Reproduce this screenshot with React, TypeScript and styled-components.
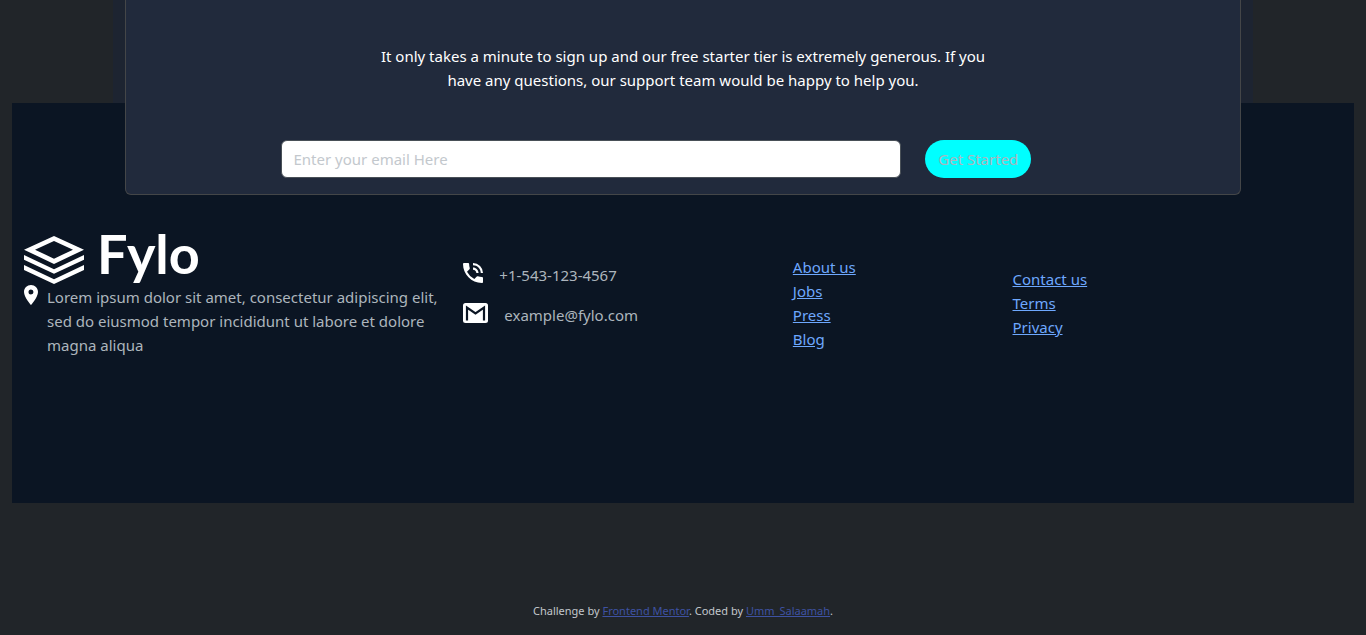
import React from "react";
import styled, { createGlobalStyle } from "styled-components";

const GlobalStyle = createGlobalStyle`
  *, *::before, *::after { box-sizing: border-box; }
  body {
    margin: 0;
    background: #212529;
    color: #adb5bd;
    font-family: "Segoe UI", "Noto Sans", "Open Sans", sans-serif;
    font-size: 15px;
    line-height: 24px;
  }
`;

const Page = styled.div`
  padding: 0 12px;
`;

const SignupBand = styled.section`
  display: grid;
  max-width: 1140px;
  margin: 0 auto;
  padding: 0 12px;
  background: #1d2431;
`;

const SignupCard = styled.div`
  position: relative;
  z-index: 1;
  display: flex;
  flex-direction: column;
  align-items: center;
  gap: 48px;
  margin-bottom: -92px;
  padding: 44px 16px 16px;
  border: 1px solid #444648;
  border-top: 0;
  border-radius: 0 0 6px 6px;
  background: #212a3c;
`;

const SignupText = styled.p`
  margin: 0;
  color: #fff;
  text-align: center;
`;

const SignupForm = styled.form`
  display: grid;
  grid-template-columns: repeat(9, 1fr);
  column-gap: 24px;
  width: 100%;
  max-width: 805px;
`;

const EmailInput = styled.input`
  grid-column: span 7;
  min-width: 0;
  height: 38px;
  padding: 6px 12px;
  border: 1px solid #495057;
  border-radius: 6px;
  background: #fff;
  color: #212529;
  font: inherit;

  &::placeholder { color: #c3c8cd; opacity: 1; }
`;

const SubmitButton = styled.button`
  grid-column: span 2;
  justify-self: start;
  height: 38px;
  padding: 6px 13px;
  border: 0;
  border-radius: 19px;
  background: #0ff;
  color: #adb5bd;
  font: inherit;
  white-space: nowrap;
`;

const Footer = styled.footer`
  display: grid;
  grid-template-columns: 4fr 3fr 2fr 3fr;
  align-items: start;
  min-height: 400px;
  padding: 130px 12px 0;
  background: #0b1523;
`;

const Brand = styled.div`
  display: flex;
  align-items: flex-end;
  gap: 13px;
  height: 52px;
  padding-bottom: 1px;
  color: #fff;
`;

const BrandName = styled.span`
  font-family: Lato, sans-serif;
  font-size: 54px;
  font-weight: 700;
  line-height: 60px;
`;

const Address = styled.div`
  display: flex;
  align-items: flex-start;
  gap: 9px;
  color: #fff;
`;

const AddressText = styled.p`
  margin: 0;
  color: #adb5bd;
`;

const ContactList = styled.address`
  display: flex;
  flex-direction: column;
  gap: 16px;
  padding-top: 30px;
  font-style: normal;
`;

const ContactRow = styled.div`
  display: flex;
  align-items: flex-start;
  gap: 16px;

  svg { flex: none; color: #fff; }
`;

const LinkList = styled.nav<{ $offset: number }>`
  display: flex;
  flex-direction: column;
  align-items: flex-start;
  padding-top: ${(p) => p.$offset}px;
`;

const FooterLink = styled.a`
  color: #6ea8fe;
`;

const Attribution = styled.p`
  margin: 96px 0 0;
  padding-bottom: 12px;
  font-size: 11px;
  text-align: center;
  color: #c3c8cd;

  a { color: #3e52a3; }
`;

const StackLogo = () => (
  <svg width="60" height="48" viewBox="0 0 180 144" fill="currentColor" aria-hidden="true">
    <path fillRule="evenodd" d="M90 0L180 41L90 84L0 41ZM90 15L33 41L90 68L147 41Z" />
    <path d="M0 57L90 100L180 57V71L90 113L0 71Z" />
    <path d="M0 87L90 130L180 87V102L90 144L0 102Z" />
  </svg>
);

const PinIcon = () => (
  <svg width="14" height="20" viewBox="0 0 14 20" fill="currentColor" aria-hidden="true">
    <path
      fillRule="evenodd"
      d="M7 0C3.1 0 0 3.1 0 7c0 5.200 7 13 7 13s7-7.800 7-13c0-3.900-3.100-7-7-7zm0 9.500a2.500 2.500 0 1 1 0-5 2.500 2.500 0 0 1 0 5z"
    />
  </svg>
);

const PhoneIcon = () => (
  <svg width="20" height="20" viewBox="3 3 18 18" fill="currentColor" aria-hidden="true">
    <path d="M20 15.500c-1.250 0-2.450-.2-3.570-.57a1.020 1.020 0 0 0-1.020.24l-2.200 2.200a15.045 15.045 0 0 1-6.590-6.590l2.200-2.210a.96.96 0 0 0 .25-1A11.360 11.360 0 0 1 8.500 4c0-.55-.45-1-1-1H4c-.55 0-1 .45-1 1 0 9.390 7.610 17 17 17 .55 0 1-.45 1-1v-3.500c0-.55-.45-1-1-1zM19 12h2a9 9 0 0 0-9-9v2c3.870 0 7 3.130 7 7zm-4 0h2c0-2.760-2.240-5-5-5v2c1.660 0 3 1.340 3 3z" />
  </svg>
);

const MailIcon = () => (
  <svg width="25" height="20" viewBox="0 0 25 20" aria-hidden="true">
    <rect width="25" height="20" rx="2.500" fill="currentColor" />
    <path d="M4 17.500V4.500L12.500 10.500L21 4.500V17.500" fill="none" stroke="#0b1523" strokeWidth="2.200" />
  </svg>
);

export default function App() {
  return (
    <>
      <GlobalStyle />
      <Page>
        <SignupBand>
          <SignupCard>
            <SignupText>
              It only takes a minute to sign up and our free starter tier is extremely generous. If you
              <br />
              have any questions, our support team would be happy to help you.
            </SignupText>
            <SignupForm onSubmit={(e) => e.preventDefault()}>
              <EmailInput type="email" placeholder="Enter your email Here" aria-label="Email address" />
              <SubmitButton type="submit">Get Started</SubmitButton>
            </SignupForm>
          </SignupCard>
        </SignupBand>
        <Footer>
          <div>
            <Brand>
              <StackLogo />
              <BrandName>Fylo</BrandName>
            </Brand>
            <Address>
              <PinIcon />
              <AddressText>
                Lorem ipsum dolor sit amet, consectetur adipiscing elit,
                <br />
                sed do eiusmod tempor incididunt ut labore et dolore
                <br />
                magna aliqua
              </AddressText>
            </Address>
          </div>
          <ContactList>
            <ContactRow>
              <PhoneIcon />
              <span>+1-543-123-4567</span>
            </ContactRow>
            <ContactRow>
              <MailIcon />
              <span>example@fylo.com</span>
            </ContactRow>
          </ContactList>
          <LinkList $offset={22} aria-label="Company">
            <FooterLink href="#about">About us</FooterLink>
            <FooterLink href="#jobs">Jobs</FooterLink>
            <FooterLink href="#press">Press</FooterLink>
            <FooterLink href="#blog">Blog</FooterLink>
          </LinkList>
          <LinkList $offset={34} aria-label="Support">
            <FooterLink href="#contact">Contact us</FooterLink>
            <FooterLink href="#terms">Terms</FooterLink>
            <FooterLink href="#privacy">Privacy</FooterLink>
          </LinkList>
        </Footer>
        <Attribution>
          Challenge by <a href="#frontend-mentor">Frontend Mentor</a>. Coded by <a href="#author">Umm_Salaamah</a>.
        </Attribution>
      </Page>
    </>
  );
}
